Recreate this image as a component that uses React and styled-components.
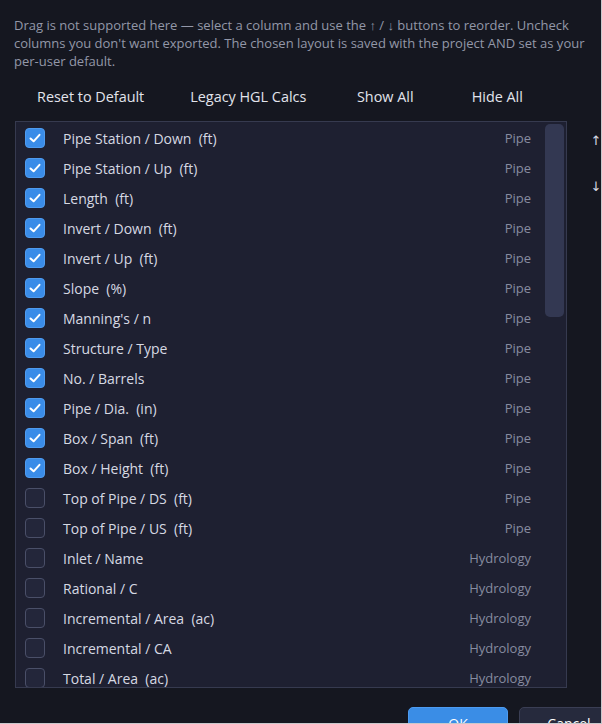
import React from "react";
import styled, { createGlobalStyle } from "styled-components";

const GlobalStyle = createGlobalStyle`
  html, body {
    margin: 0;
    padding: 0;
    background: #c8c9cc;
  }
  body {
    font-family: "Open Sans", "Noto Sans", "Liberation Sans", sans-serif;
  }
  * { box-sizing: border-box; }
`;

const Dialog = styled.div`
  width: 601px;
  height: 723px;
  overflow: hidden;
  background: #151720;
`;

const Inner = styled.div`
  width: 660px;
  padding: 16px 0 0 15px;
`;

const Description = styled.p`
  margin: 0 0 0 -1px;
  width: 580px;
  font-size: 13px;
  line-height: 18px;
  color: #9397a8;
`;

const Toolbar = styled.div`
  display: flex;
  gap: 2px;
  margin-top: 10px;
  height: 32px;
`;

const TextButton = styled.button`
  min-width: 110px;
  background: transparent;
  border: none;
  padding: 0 22px;
  height: 32px;
  font-family: inherit;
  font-size: 14.4px;
  color: #e2e4ec;
  cursor: pointer;
`;

const Body = styled.div`
  display: flex;
  gap: 9px;
  margin-top: 9px;
`;

const List = styled.div`
  flex: 0 0 552px;
  height: 567px;
  display: flex;
  background: #1e2031;
  border: 1px solid #363a4f;
  overflow: hidden;
`;

const Rows = styled.div`
  flex: 1;
  padding: 1px 0;
  overflow: hidden;
`;

const Track = styled.div`
  flex: 0 0 22px;
  padding: 2px 2px 0 1px;
`;

const Thumb = styled.div`
  height: 193px;
  border-radius: 5px;
  background: #333852;
`;

const Row = styled.label`
  display: flex;
  align-items: center;
  height: 30px;
  padding: 0 13px 0 9px;
  cursor: pointer;
`;

const Box = styled.span`
  flex: 0 0 20px;
  width: 20px;
  height: 20px;
  border-radius: 4px;
  display: flex;
  align-items: center;
  justify-content: center;
  background: ${(p) => (p.$checked ? "#3a8ce8" : "#23263a")};
  border: 1px solid ${(p) => (p.$checked ? "#4f9bef" : "#4a4f68")};
`;

const Label = styled.span`
  flex: 1;
  margin-left: 18px;
  font-size: 14px;
  color: #d6d9e3;
  white-space: pre;
`;

const Category = styled.span`
  font-size: 13px;
  color: #878ca0;
`;

const Side = styled.div`
  display: flex;
  flex-direction: column;
  gap: 8px;
`;

const ArrowButton = styled.button`
  width: 40px;
  height: 38px;
  background: transparent;
  border: none;
  color: #d6d9e3;
  font-family: "DejaVu Sans", sans-serif;
  font-size: 13px;
  padding: 0;
`;

const Footer = styled.div`
  display: flex;
  gap: 11px;
  margin-top: 19px;
  padding-left: 393px;
`;

const DialogButton = styled.button`
  width: 100px;
  height: 32px;
  border-radius: 5px;
  font-family: inherit;
  font-size: 14px;
  color: #ffffff;
  background: ${(p) => (p.$primary ? "#3a8de6" : "#262a3d")};
  border: 1px solid ${(p) => (p.$primary ? "#4d9bf0" : "#3a3e54")};
  padding: 0;
`;

const Check = () => (
  <svg width="14" height="14" viewBox="0 0 14 14">
    <polyline
      points="2.5,7.5 5.6,10.3 11.5,3.8"
      fill="none"
      stroke="#ffffff"
      strokeWidth="2"
      strokeLinecap="round"
      strokeLinejoin="round"
    />
  </svg>
);

const columns = [
  ["Pipe Station / Down  (ft)", "Pipe", true],
  ["Pipe Station / Up  (ft)", "Pipe", true],
  ["Length  (ft)", "Pipe", true],
  ["Invert / Down  (ft)", "Pipe", true],
  ["Invert / Up  (ft)", "Pipe", true],
  ["Slope  (%)", "Pipe", true],
  ["Manning's / n", "Pipe", true],
  ["Structure / Type", "Pipe", true],
  ["No. / Barrels", "Pipe", true],
  ["Pipe / Dia.  (in)", "Pipe", true],
  ["Box / Span  (ft)", "Pipe", true],
  ["Box / Height  (ft)", "Pipe", true],
  ["Top of Pipe / DS  (ft)", "Pipe", false],
  ["Top of Pipe / US  (ft)", "Pipe", false],
  ["Inlet / Name", "Hydrology", false],
  ["Rational / C", "Hydrology", false],
  ["Incremental / Area  (ac)", "Hydrology", false],
  ["Incremental / CA", "Hydrology", false],
  ["Total / Area  (ac)", "Hydrology", false],
  ["Total / CA", "Hydrology", false],
  ["Inlet Time  (min)", "Hydrology", false],
  ["System Time  (min)", "Hydrology", false],
  ["Intensity  (in/hr)", "Hydrology", false],
  ["Runoff / Q  (cfs)", "Hydrology", false],
];

export default function App() {
  return (
    <>
      <GlobalStyle />
      <Dialog>
        <Inner>
          <Description>
            Drag is not supported here — select a column and use the ↑ / ↓ buttons to reorder.
            Uncheck columns you don't want exported. The chosen layout is saved with the project
            AND set as your per-user default.
          </Description>
          <Toolbar>
            <TextButton>Reset to Default</TextButton>
            <TextButton>Legacy HGL Calcs</TextButton>
            <TextButton>Show All</TextButton>
            <TextButton>Hide All</TextButton>
          </Toolbar>
          <Body>
            <List>
              <Rows>
                {columns.map(([label, cat, checked]) => (
                  <Row key={label}>
                    <Box $checked={checked}>{checked && <Check />}</Box>
                    <Label>{label}</Label>
                    <Category>{cat}</Category>
                  </Row>
                ))}
              </Rows>
              <Track>
                <Thumb />
              </Track>
            </List>
            <Side>
              <ArrowButton>↑</ArrowButton>
              <ArrowButton>↓</ArrowButton>
            </Side>
          </Body>
          <Footer>
            <DialogButton $primary>OK</DialogButton>
            <DialogButton>Cancel</DialogButton>
          </Footer>
        </Inner>
      </Dialog>
    </>
  );
}
